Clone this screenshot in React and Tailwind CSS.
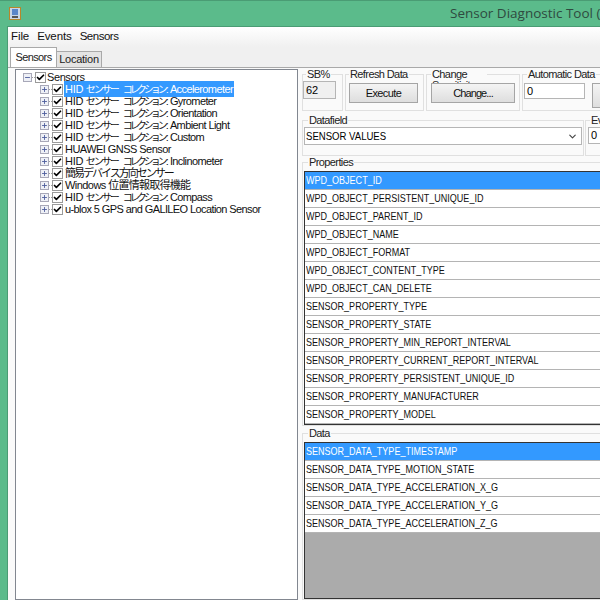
import { Check, Plus, Minus, ChevronDown } from 'lucide-react';

const hid = (name) => [
    ['HID ', 'tracking-[-0.3px]'],
    ['センサー', 'text-[10px] tracking-[-2px]'],
    ['コレクション', 'ml-[5px] text-[10px] tracking-[-3px]'],
    [':', 'ml-[1px]'],
    [name, 'ml-[1px] tracking-[-0.6px]'],
];

const sensors = [
    { id: 'accel', parts: hid('Accelerometer'), selected: true },
    { id: 'gyro', parts: hid('Gyrometer') },
    { id: 'orient', parts: hid('Orientation') },
    { id: 'light', parts: hid('Ambient Light') },
    { id: 'custom', parts: hid('Custom') },
    { id: 'gnss', parts: [['HUAWEI GNSS Sensor', 'tracking-[-0.55px]']] },
    { id: 'incl', parts: hid('Inclinometer') },
    { id: 'simple', parts: [['簡易デバイス方向センサー', 'tracking-[-2px]']] },
    { id: 'win', parts: [['Windows ', 'tracking-[-0.55px]'], ['位置情報取得機能', 'tracking-[-0.75px]']] },
    { id: 'compass', parts: hid('Compass') },
    { id: 'ublox', parts: [['u-blox 5 GPS and GALILEO Location Sensor', 'tracking-[-0.6px]']] },
];

const properties = [
    'WPD_OBJECT_ID',
    'WPD_OBJECT_PERSISTENT_UNIQUE_ID',
    'WPD_OBJECT_PARENT_ID',
    'WPD_OBJECT_NAME',
    'WPD_OBJECT_FORMAT',
    'WPD_OBJECT_CONTENT_TYPE',
    'WPD_OBJECT_CAN_DELETE',
    'SENSOR_PROPERTY_TYPE',
    'SENSOR_PROPERTY_STATE',
    'SENSOR_PROPERTY_MIN_REPORT_INTERVAL',
    'SENSOR_PROPERTY_CURRENT_REPORT_INTERVAL',
    'SENSOR_PROPERTY_PERSISTENT_UNIQUE_ID',
    'SENSOR_PROPERTY_MANUFACTURER',
    'SENSOR_PROPERTY_MODEL',
];

const dataTypes = [
    'SENSOR_DATA_TYPE_TIMESTAMP',
    'SENSOR_DATA_TYPE_MOTION_STATE',
    'SENSOR_DATA_TYPE_ACCELERATION_X_G',
    'SENSOR_DATA_TYPE_ACCELERATION_Y_G',
    'SENSOR_DATA_TYPE_ACCELERATION_Z_G',
];

function Checkbox() {
    return (
        <span className="w-[11px] h-[11px] border border-[#9a9a9a] bg-white flex items-center justify-center shrink-0">
            <Check size={11} strokeWidth={4.5} className="text-black" />
        </span>
    );
}

function Expander({ open }) {
    const Icon = open ? Minus : Plus;
    return (
        <span className="w-[9px] h-[9px] border border-[#a8a8b8] bg-[#eef0f6] flex items-center justify-center shrink-0">
            <Icon size={7} strokeWidth={3} className="text-[#4a5a9a]" />
        </span>
    );
}

function Connector() {
    return <span className="w-[3px] border-t border-dotted border-[#a0a0a0] shrink-0" />;
}

function Group({ title, className, legendClass = 'ml-[4px] whitespace-nowrap', children }) {
    return (
        <fieldset className={`border border-[#e0e0e0] min-w-0 ${className}`}>
            <legend className={`h-[11px] text-[11px] leading-[11px] tracking-[-0.6px] text-[#222] px-[1px] ${legendClass}`}>{title}</legend>
            {children}
        </fieldset>
    );
}

function Button({ children, className }) {
    return (
        <div className={`relative z-10 border border-[#a5a5a5] bg-gradient-to-b from-[#f4f4f4] to-[#dedede] flex items-center justify-center text-[11px] text-[#111] ${className}`}>
            {children}
        </div>
    );
}

function ListRow({ text, selected }) {
    return (
        <div className={`h-[18px] pl-[1px] flex items-center whitespace-nowrap text-[11px] border-b border-[#b4b4b4] ${selected ? 'bg-[#3399ff] text-white' : 'bg-white text-[#111]'}`}>
            <span className="inline-block origin-left scale-x-[0.82]">{text}</span>
        </div>
    );
}

export default function App() {
    return (
        <div className="w-[600px] h-[600px] overflow-hidden bg-[#5bbb8b] flex flex-col font-['Liberation_Sans','Noto_Sans_CJK_JP',sans-serif]">
            {/* Title bar */}
            <div className="h-[26px] shrink-0 flex items-center pl-[9px] border-t border-[#4a9c74]">
                <svg width="12" height="13" viewBox="0 0 12 13" className="shrink-0">
                    <rect x="0.5" y="0.5" width="11" height="12" fill="#c9d6e6" stroke="#b8862a" />
                    <rect x="3" y="2" width="6" height="6" fill="#5a86c8" />
                    <rect x="3" y="9" width="6" height="2" fill="#555" />
                </svg>
                <span className="ml-[429px] whitespace-nowrap text-[13.5px] text-[#2f4a40] font-['Open_Sans',sans-serif]">
                    Sensor Diagnostic Tool (C
                </span>
            </div>

            {/* Window body */}
            <div className="flex-1 ml-[7px] min-h-0 flex flex-col bg-[#f0f0f0] border-t border-l border-[#4a9c74]">
                <div className="h-[20px] shrink-0 flex items-center gap-[8px] pl-[3px] text-[11.5px] tracking-[-0.1px] text-[#111] bg-gradient-to-b from-white to-[#f0f0f0]">
                    <span>File</span>
                    <span>Events</span>
                    <span className="tracking-[-0.5px]">Sensors</span>
                </div>

                {/* Tabs */}
                <div className="h-[20px] shrink-0 flex items-end pl-[2px]">
                    <div className="w-[47px] h-[20px] bg-white border border-b-0 border-[#a9a9a9] flex items-center justify-center text-[11px] tracking-[-0.6px] text-[#222]">Sensors</div>
                    <div className="w-[45px] h-[16px] bg-[#e4e4e4] border border-b-0 border-l-0 border-[#a9a9a9] flex items-center justify-center text-[11px] tracking-[-0.25px] text-[#222]">Location</div>
                </div>

                <div className="flex-1 min-h-0 flex pl-[7px] pt-[1px] bg-[#fafafa] border-t border-[#a9a9a9]">
                    {/* Tree */}
                    <div className="w-[283px] shrink-0 bg-white border border-[#828790] pl-[7px] pt-[1px] text-[11px] text-[#111]">
                        <div className="h-[12px] flex items-center">
                            <Expander open />
                            <Connector />
                            <Checkbox />
                            <span className="ml-[1px] tracking-[-0.4px]">Sensors</span>
                        </div>
                        {sensors.map((s) => (
                            <div key={s.id} className="h-[12px] flex items-center pl-[17px] whitespace-nowrap">
                                <Expander />
                                <Connector />
                                <Checkbox />
                                <span className={`ml-[1px] ${s.selected ? 'bg-[#3399ff] text-white pl-[1px] pr-[1px]' : 'pl-[1px]'}`}>
                                    {s.parts.map(([text, cls]) => <span key={text} className={cls}>{text}</span>)}
                                </span>
                            </div>
                        ))}
                    </div>

                    {/* Right side */}
                    <div className="ml-[4px] flex-1 min-w-0 flex flex-col gap-[4px] overflow-hidden">
                        <div className="flex h-[42px] shrink-0 w-[340px]">
                            <Group title="SB%" legendClass="ml-[3px] whitespace-nowrap" className="w-[41px] shrink-0 pr-[6px]">
                                <div className="mt-[1px] h-[18px] border border-[#b5b5b5] bg-[#f0f0f0] text-[11px] pl-[2px] flex items-center">62</div>
                            </Group>
                            <Group title="Refresh Data" legendClass="ml-0 whitespace-nowrap" className="ml-[2px] w-[79px] shrink-0 pl-[3px] pr-[5px]">
                                <Button className="mt-[3px] h-[20px] tracking-[-0.6px]">Execute</Button>
                            </Group>
                            <Group title="Change Sensitivity" legendClass="ml-0 w-[56px]" className="ml-[2px] w-[94px] shrink-0 px-[4px]">
                                <Button className="mt-[3px] h-[20px] tracking-[-0.9px]">Change...</Button>
                            </Group>
                            <Group title="Automatic Data" legendClass="ml-[3px] whitespace-nowrap" className="ml-[2px] w-[110px] shrink-0 pl-[1px]">
                                <div className="mt-[3px] flex gap-[7px]">
                                    <div className="w-[61px] h-[16px] border border-[#b5b5b5] bg-white text-[11px] pl-[2px] flex items-center">0</div>
                                    <Button className="w-[30px] h-[25px]" />
                                </div>
                            </Group>
                        </div>

                        <div className="flex h-[41px] shrink-0 w-[340px]">
                            <Group title="Datafield" className="w-[282px] shrink-0 px-[1px]">
                                <div className="mt-[1px] h-[18px] border border-[#b5b5b5] bg-white text-[11px] pl-[1px] pr-[3px] flex items-center justify-between">
                                    <span className="inline-block origin-left scale-x-[0.87]">SENSOR VALUES</span>
                                    <ChevronDown size={11} strokeWidth={2.5} className="text-[#444]" />
                                </div>
                            </Group>
                            <Group title="Event Sensitivity" legendClass="ml-[2px] w-[40px]" className="ml-[1px] w-[50px] shrink-0 pl-[2px]">
                                <div className="relative z-10 mt-[1px] h-[17px] border border-[#b5b5b5] bg-white text-[11px] pl-[2px] flex items-center">0</div>
                            </Group>
                        </div>

                        <Group title="Properties" legendClass="ml-[4px] mb-[3px] whitespace-nowrap" className="mt-[-3px] shrink-0 w-[320px] pl-[1px]">
                            <div className="border border-[#333] border-r-0">
                                {properties.map((p, i) => <ListRow key={p} text={p} selected={i === 0} />)}
                            </div>
                        </Group>

                        <Group title="Data" legendClass="ml-[4px] mb-[3px] whitespace-nowrap" className="mt-[-2px] flex-1 min-h-0 w-[320px] pl-[1px]">
                            <div className="border border-[#333] border-r-0 h-full bg-[#ababab]">
                                {dataTypes.map((p, i) => <ListRow key={p} text={p} selected={i === 0} />)}
                            </div>
                        </Group>
                    </div>
                </div>
            </div>
        </div>
    );
}
